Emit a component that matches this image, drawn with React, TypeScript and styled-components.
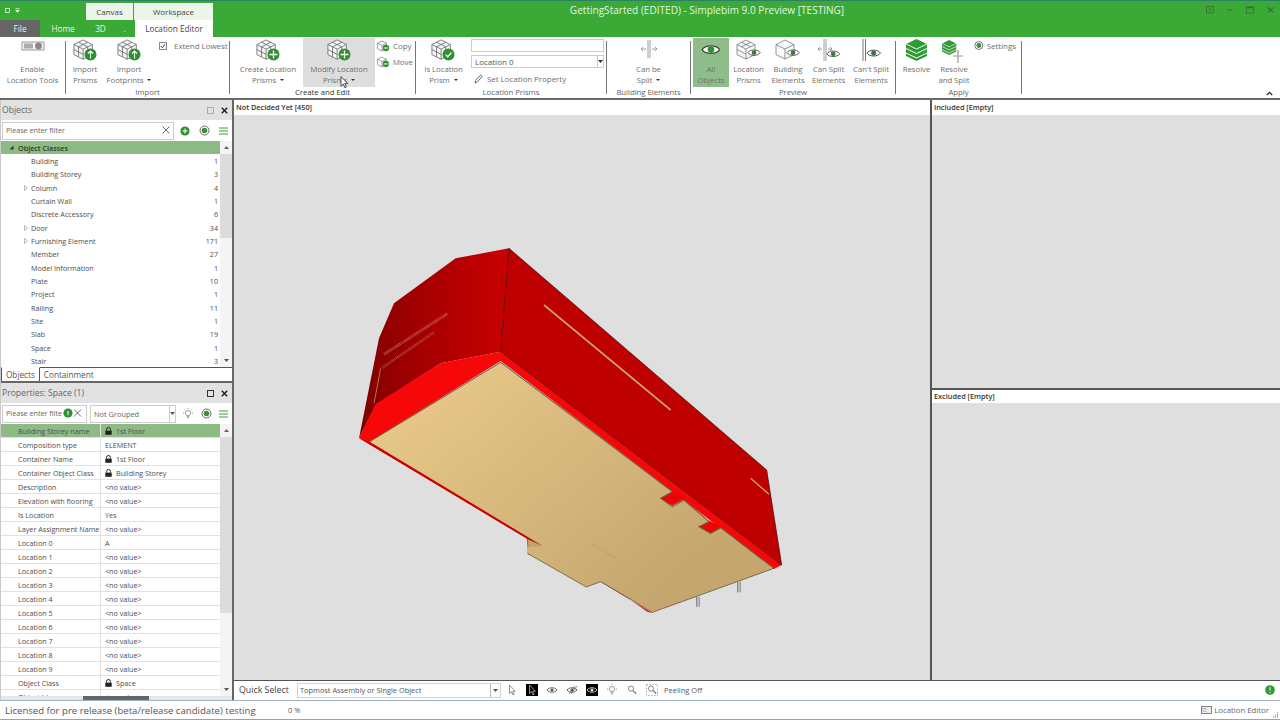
import * as React from 'react'
import styled, { createGlobalStyle } from 'styled-components'

const GlobalStyle = createGlobalStyle`
  html, body { margin: 0; padding: 0; height: 100%; overflow: hidden; }
  body { font-family: "Open Sans", "Noto Sans", "Liberation Sans", sans-serif; }
  * { box-sizing: border-box; }
`

const Window = styled.div`
  width: 1280px;
  height: 720px;
  display: flex;
  flex-direction: column;
  background: #fff;
  overflow: hidden;
`

/* ---------- title bar ---------- */
const TitleBar = styled.div`
  height: 37px;
  background: #3aa935;
  border-top: 1px solid #2b7f63;
  display: flex;
  flex-direction: column;
`
const TitleRow = styled.div`
  height: 19px;
  padding-top: 2px;
  display: flex;
`
const Qat = styled.div`
  width: 86px;
  padding: 4px 0 0 5px;
  display: flex;
  gap: 4px;
  align-items: flex-start;
`
const ContextTab = styled.div<{ $w: number }>`
  width: ${p => p.$w}px;
  margin-right: 1px;
  background: #ecf5ea;
  color: #444;
  font-size: 8px;
  display: flex;
  align-items: center;
  justify-content: center;
`
const Title = styled.div`
  flex: 1;
  text-align: center;
  color: #e6f4e4;
  font-size: 10.05px;
  line-height: 15px;
`
const WinControls = styled.div`
  width: 80px;
  display: flex;
  align-items: flex-start;
  padding-top: 3px;
`
const WinButton = styled.div`
  width: 20px;
  display: flex;
  justify-content: center;
`
const TabRow = styled.div`
  height: 17px;
  display: flex;
`
const FileTab = styled.div`
  width: 40px;
  background: #666;
  color: #eee;
  font-size: 8.2px;
  padding-bottom: 1px;
  display: flex;
  align-items: center;
  justify-content: center;
`
const Tab = styled.div<{ $w: number; $active?: boolean }>`
  width: ${p => p.$w}px;
  background: ${p => (p.$active ? '#fff' : 'transparent')};
  color: ${p => (p.$active ? '#444' : '#e8f5e6')};
  font-size: 8.2px;
  padding-bottom: 1px;
  display: flex;
  align-items: center;
  justify-content: center;
`

/* ---------- ribbon ---------- */
const Ribbon = styled.div`
  height: 63px;
  background: #fff;
  border-bottom: 2px solid #6a6a6a;
  display: flex;
  position: relative;
`
const Group = styled.div<{ $w: number }>`
  width: ${p => p.$w}px;
  display: flex;
  flex-direction: column;
  align-items: stretch;
`
const GroupBody = styled.div<{ $pl?: number }>`
  height: 50px;
  padding: 1px 0 0 ${p => p.$pl ?? 0}px;
  display: flex;
`
const GroupLabel = styled.div<{ $dark?: boolean }>`
  text-align: center;
  font-size: 7.8px;
  letter-spacing: -0.05px;
  line-height: 10px;
  color: ${p => (p.$dark ? '#333' : '#666')};
`
const Sep = styled.div`
  width: 1px;
  margin: 4px 0 4px;
  background: #777;
`
const RibbonButton = styled.div<{ $w: number; $state?: 'hover' | 'on' }>`
  width: ${p => p.$w}px;
  height: 49px;
  flex-shrink: 0;
  display: flex;
  flex-direction: column;
  align-items: center;
  padding-top: 1px;
  background: ${p =>
    p.$state === 'hover' ? '#dedede' : p.$state === 'on' ? '#8fbd8a' : 'transparent'};
`
const ButtonIcon = styled.div`
  height: 25px;
  display: flex;
  align-items: flex-start;
  justify-content: center;
`
const ButtonText = styled.div`
  font-size: 7.8px;
  letter-spacing: -0.05px;
  line-height: 10.5px;
  color: #6f6f6f;
  text-align: center;
  white-space: nowrap;
`
const Caret = styled.span`
  display: inline-block;
  width: 0;
  height: 0;
  margin-left: 4px;
  vertical-align: 2px;
  border-left: 2px solid transparent;
  border-right: 2px solid transparent;
  border-top: 2px solid #333;
`
const SmallStack = styled.div<{ $w: number; $pl?: number }>`
  width: ${p => p.$w}px;
  padding-left: ${p => p.$pl ?? 0}px;
  display: flex;
  flex-direction: column;
  gap: 3px;
  padding-top: 1px;
`
const SmallItem = styled.div`
  height: 13px;
  display: flex;
  align-items: center;
  gap: 3px;
  font-size: 8px;
  letter-spacing: -0.05px;
  color: #6f6f6f;
  white-space: nowrap;
`
const CheckBox = styled.span`
  width: 8px;
  height: 8px;
  margin-right: 4px;
  border: 1px solid #888;
  display: flex;
  align-items: center;
  justify-content: center;
`
const ComboStack = styled.div`
  width: 133px;
  padding-top: 1px;
  display: flex;
  flex-direction: column;
`
const BlankInput = styled.div`
  height: 13px;
  border: 1px solid #ccc;
`
const RibbonCombo = styled.div`
  height: 13px;
  margin-top: 3px;
  border: 1px solid #ccc;
  display: flex;
  align-items: center;
  justify-content: space-between;
  padding-left: 3px;
  font-size: 8px;
  color: #555;
`
const DropButton = styled.div`
  width: 6px;
  align-self: stretch;
  border-left: 1px solid #ccc;
  display: flex;
  align-items: center;
  justify-content: center;
`
const SetProperty = styled(SmallItem)`
  margin-top: 4px;
  padding-left: 3px;
  gap: 4px;
`
const Collapse = styled.div`
  position: absolute;
  right: 7px;
  bottom: 2px;
  line-height: 0;
`
const Pointer = styled.div`
  position: absolute;
  left: 340px;
  top: 39px;
  line-height: 0;
`

/* ---------- main area ---------- */
const Main = styled.div`
  height: 600px;
  display: flex;
`
const LeftColumn = styled.div`
  width: 234px;
  display: flex;
  flex-direction: column;
  border-right: 2px solid #666;
  border-left: 1px solid #c9c9c9;
`
const PanelHead = styled.div`
  height: 20px;
  background: #e2e2e2;
  color: #666;
  font-size: 8.6px;
  display: flex;
  align-items: center;
  padding: 0 1px 0 1px;
`
const PanelTitle = styled.div`
  flex: 1;
`
const HeadIcons = styled.div`
  display: flex;
  align-items: center;
  gap: 7px;
  padding-right: 3px;
`
const FilterRow = styled.div`
  height: 21px;
  display: flex;
  align-items: center;
  background: #fff;
`
const FilterInput = styled.div<{ $w: number }>`
  width: ${p => p.$w}px;
  height: 18px;
  margin-left: 1px;
  flex-shrink: 0;
  border: 1px solid #ccc;
  padding: 0 3px 1px 3px;
  display: flex;
  align-items: center;
  justify-content: space-between;
  font-size: 7.2px;
  color: #666;
  white-space: nowrap;
  overflow: hidden;
`
const FilterActions = styled.div`
  flex: 1;
  display: flex;
  align-items: center;
  justify-content: space-between;
  padding: 0 4px 0 6px;
`
const GroupCombo = styled.div`
  width: 86px;
  height: 18px;
  margin-left: 3px;
  flex-shrink: 0;
  border: 1px solid #ccc;
  padding-left: 3px;
  display: flex;
  align-items: center;
  justify-content: space-between;
  font-size: 7.4px;
  color: #666;
`
const ListArea = styled.div<{ $h: number }>`
  height: ${p => p.$h}px;
  display: flex;
  overflow: hidden;
`
const ListBody = styled.div`
  width: 219px;
  flex-shrink: 0;
  overflow: hidden;
`
const ScrollBar = styled.div`
  flex: 1;
  display: flex;
  flex-direction: column;
  background: #f4f4f4;
`
const ScrollEnd = styled.div`
  height: 13px;
  display: flex;
  align-items: center;
  justify-content: center;
`
const ScrollThumb = styled.div<{ $h: number }>`
  height: ${p => p.$h}px;
  background: #dcdcdc;
`
const ScrollFill = styled.div`
  flex: 1;
`
const TreeHead = styled.div`
  height: 13.3px;
  background: #8dba85;
  display: flex;
  align-items: center;
  padding-left: 8px;
  gap: 4px;
  font-size: 7.2px;
  font-weight: 600;
  color: #2d3d2a;
`
const TreeRow = styled.div`
  height: 13.33px;
  display: grid;
  grid-template-columns: 30px 1fr 28px;
  align-items: center;
  font-size: 7.2px;
  color: #4d4d4d;
`
const Expander = styled.span`
  justify-self: end;
  margin-right: 3px;
  line-height: 0;
`
const Count = styled.span`
  text-align: right;
  padding-right: 2px;
`
const TabStrip = styled.div`
  height: 16px;
  display: flex;
  background: #fff;
  border-top: 1px solid #555;
  border-bottom: 2px solid #666;
  font-size: 8.2px;
  color: #555;
`
const StripTab = styled.div<{ $active?: boolean }>`
  padding: 0 4px 0 4px;
  margin-top: -1px;
  display: flex;
  align-items: center;
  border-right: ${p => (p.$active ? '1px solid #555' : 'none')};
  border-left: ${p => (p.$active ? '1px solid #555' : 'none')};
  border-top: ${p => (p.$active ? '1px solid #fff' : 'none')};
`
const PropRow = styled.div<{ $selected?: boolean }>`
  height: 14px;
  display: grid;
  grid-template-columns: 100px 1fr;
  align-items: center;
  font-size: 7.2px;
  color: #4d4d4d;
  border-bottom: 1px solid #e2e2e2;
  background: ${p => (p.$selected ? '#8dba85' : '#fff')};
`
const PropName = styled.div`
  padding-left: 17px;
  height: 100%;
  display: flex;
  align-items: center;
  border-right: 1px solid #e2e2e2;
  white-space: nowrap;
`
const PropValue = styled.div`
  padding-left: 4px;
  display: flex;
  align-items: center;
  gap: 4px;
`
const HScroll = styled.div`
  height: 4px;
  padding-left: 82px;
  background: #e6e6e6;
`
const HThumb = styled.div`
  width: 66px;
  height: 100%;
  background: #666;
`
const RightColumn = styled.div`
  flex: 1;
  display: flex;
  flex-direction: column;
  min-width: 0;
`
const Views = styled.div`
  height: 580px;
  display: flex;
`
const CenterView = styled.div`
  width: 696px;
  flex-shrink: 0;
  display: flex;
  flex-direction: column;
`
const SidePanes = styled.div`
  flex: 1;
  display: flex;
  flex-direction: column;
  border-left: 2px solid #555;
`
const Pane = styled.div<{ $h?: number; $line?: boolean }>`
  height: ${p => (p.$h ? `${p.$h}px` : 'auto')};
  flex: ${p => (p.$h ? 'none' : 1)};
  display: flex;
  flex-direction: column;
  background: #dfdfdf;
  border-bottom: ${p => (p.$line ? '2px solid #555' : 'none')};
`
const ViewHead = styled.div<{ $h?: number }>`
  height: ${p => p.$h ?? 15}px;
  flex-shrink: 0;
  background: #fff;
  padding: 0 0 2px 2px;
  display: flex;
  align-items: center;
  font-size: 7.3px;
  font-weight: 600;
  color: #333;
`
const Canvas3D = styled.div`
  flex: 1;
  background: #dfdfdf;
  line-height: 0;
`
const SceneSvg = styled.svg`
  display: block;
  width: 696px;
  height: 565px;
`
const QuickBar = styled.div`
  height: 20px;
  background: #fff;
  border-top: 1px solid #555;
  display: flex;
  align-items: center;
  padding: 0 0 1px 5px;
`
const QuickLabel = styled.div`
  width: 58px;
  font-size: 8.8px;
  color: #444;
`
const QuickCombo = styled.div`
  width: 204px;
  height: 15px;
  border: 1px solid #ccd4dc;
  display: flex;
  align-items: center;
  justify-content: space-between;
  padding-left: 2px;
  font-size: 7.4px;
  color: #555;
`
const QuickDrop = styled.div`
  width: 10px;
  align-self: stretch;
  border-left: 1px solid #bbb;
  display: flex;
  align-items: center;
  justify-content: center;
`
const QuickIcons = styled.div`
  display: flex;
  align-items: center;
  margin-left: 1px;
`
const QuickIcon = styled.div`
  width: 20px;
  display: flex;
  justify-content: center;
`
const PeelLabel = styled.div`
  margin-left: 2px;
  font-size: 7.5px;
  color: #555;
`
const QuickEnd = styled.div`
  flex: 1;
  display: flex;
  justify-content: flex-end;
  padding-right: 5px;
`
const StatusBar = styled.div`
  height: 20px;
  background: #fff;
  border-top: 1px solid #9db0bb;
  border-bottom: 1px solid #8ea6b5;
  display: flex;
  align-items: center;
  padding: 0 11px 0 5px;
  font-size: 9.6px;
  color: #555;
  position: relative;
`
const StatusText = styled.div`
  width: 283px;
`
const Percent = styled.div`
  flex: 1;
  font-size: 7.4px;
`
const StatusRight = styled.div`
  display: flex;
  align-items: center;
  gap: 2px;
  font-size: 7.8px;
  color: #667;
`
const Grip = styled.div`
  position: absolute;
  right: 1px;
  bottom: 1px;
  line-height: 0;
`

/* ---------- icons ---------- */
const Svg = ({ w, h, children }: { w: number; h: number; children: React.ReactNode }) => (
  <svg width={w} height={h} viewBox={`0 0 ${w} ${h}`} fill="none">
    {children}
  </svg>
)

const Cubes = ({ scale = 1 }: { scale?: number }) => (
  <g transform={`scale(${scale})`} stroke="#6a6a6a" strokeWidth="0.9" fill="#f6f6f6">
    <path d="M11 1l10 5v11l-10 5-10-5V6z" />
    <path d="M1 6l10 5 10-5M11 11v11" fill="none" />
    <path d="M6 3.5l10 5M16 3.5L6 8.5M1 11.5l10 5.2M6 8.5v11M16 8.5v11" fill="none" />
  </g>
)

type Badge = 'plus' | 'up' | 'check'
const CubeBadge = ({ badge }: { badge: Badge }) => (
  <Svg w={25} h={24}>
    <Cubes scale={0.92} />
    <circle cx="17.5" cy="15.5" r="6" fill="#2f9030" />
    {badge === 'plus' && <path d="M17.5 11.5v8M13.5 15.5h8" stroke="#fff" strokeWidth="1.3" />}
    {badge === 'up' && <path d="M17.5 19.5v-7M15 14.5l2.5-2.5 2.5 2.5" stroke="#fff" strokeWidth="1.1" />}
    {badge === 'check' && <path d="M14.6 15.6l2.1 2.1 3.7-4" stroke="#fff" strokeWidth="1.3" />}
  </Svg>
)
const SmallCube = () => (
  <Svg w={13} h={12}>
    <g stroke="#777" strokeWidth="0.7" fill="#fff">
      <path d="M5 1l4.5 2.2v5.5L5 11 .6 8.7V3.2z" />
      <path d="M.6 3.2L5 5.5l4.5-2.3M5 5.5V11" />
    </g>
    <circle cx="9" cy="8" r="3.2" fill="#2f9030" />
    <path d="M7 8h4" stroke="#fff" strokeWidth="1" />
  </Svg>
)
const ToggleIcon = () => (
  <Svg w={24} h={14}>
    <rect x="1" y="3" width="22" height="8" fill="#f4f4f4" stroke="#999" />
    <rect x="3" y="4.5" width="9" height="5" fill="#aaa" />
    <circle cx="17.5" cy="7" r="3.4" fill="#888" />
  </Svg>
)
const Eye = ({ x = 0, y = 0, s = 1, pupil = '#555' }: { x?: number; y?: number; s?: number; pupil?: string }) => (
  <g transform={`translate(${x} ${y}) scale(${s})`}>
    <path d="M1 6c3-4.6 13-4.6 16 0-3 4.6-13 4.6-16 0z" fill="#fff" stroke="#444" strokeWidth="1.1" />
    <circle cx="9" cy="6" r="3" fill={pupil} />
  </g>
)
const AllObjectsIcon = () => (
  <Svg w={22} h={20}>
    <Eye x={1} y={4} s={1.1} pupil="#2f9030" />
  </Svg>
)
const CubeEye = ({ stack }: { stack?: boolean }) => (
  <Svg w={26} h={24}>
    <g stroke="#777" strokeWidth="0.8" fill="#fafafa">
      <path d="M10 1l9 4.6v10L10 20l-9-4.4v-10z" />
      <path d="M1 5.6L10 10l9-4.4M10 10v10" fill="none" />
      {stack && <path d="M5.5 3.3l9 4.5M14.5 3.3l-9 4.5M1 10.5l9 4.6" fill="none" />}
    </g>
    <Eye x={11} y={9} s={0.78} pupil="#3a7a3a" />
  </Svg>
)
const CanSplitIcon = () => (
  <Svg w={28} h={24}>
    <path d="M9 0v22M11 0v22" stroke="#888" strokeWidth="0.8" />
    <path d="M3 10h4M3 10l2-2M3 10l2 2M17 10h-4M17 10l-2-2M17 10l-2 2" stroke="#888" strokeWidth="0.8" />
    <Eye x={11} y={10} s={0.8} pupil="#3a7a3a" />
  </Svg>
)
const CantSplitIcon = () => (
  <Svg w={26} h={24}>
    <path d="M5 0v22M7.5 0v22" stroke="#666" strokeWidth="0.9" />
    <Eye x={8} y={9} s={0.85} pupil="#3a7a3a" />
  </Svg>
)
const BeSplitIcon = () => (
  <Svg w={22} h={22}>
    <path d="M10 1v18M12 1v18" stroke="#888" strokeWidth="0.8" />
    <path d="M3 10h5M3 10l2-2M3 10l2 2M19 10h-5M19 10l-2-2M19 10l-2 2" stroke="#888" strokeWidth="0.8" />
  </Svg>
)
const Stack = () => (
  <g>
    <path d="M10.5 0L21 5v12L10.5 22 0 17V5z" fill="#2f9a38" />
    <path d="M0 5l10.5 5L21 5" stroke="#fff" strokeWidth="0.9" fill="none" />
    <path d="M0 9.5l10.5 5 10.5-5M0 14l10.5 5L21 14" stroke="#fff" strokeWidth="1" fill="none" />
  </g>
)
const ResolveIcon = () => (
  <Svg w={22} h={24}>
    <Stack />
  </Svg>
)
const ResolveSplitIcon = () => (
  <Svg w={26} h={24}>
    <g transform="translate(1 1) scale(.68)">
      <Stack />
    </g>
    <path d="M17 11v13M12 17h10" stroke="#999" strokeWidth="1.2" />
  </Svg>
)
const Target = ({ r = 5 }: { r?: number }) => (
  <Svg w={r * 2 + 1} h={r * 2 + 1}>
    <circle cx={r + 0.5} cy={r + 0.5} r={r - 0.5} stroke="#666" strokeWidth="1" fill="#fff" />
    <circle cx={r + 0.5} cy={r + 0.5} r={r - 2.2} fill="#3e8e3e" />
  </Svg>
)
const Hamburger = () => (
  <Svg w={9} h={8}>
    <path d="M0 1h9M0 4h9M0 7h9" stroke="#39a335" strokeWidth="1.2" />
  </Svg>
)
const PlusCircle = () => (
  <Svg w={10} h={10}>
    <circle cx="5" cy="5" r="4.6" fill="#2f9030" />
    <path d="M5 2.4v5.2M2.4 5h5.2" stroke="#fff" strokeWidth="1.1" />
  </Svg>
)
const Cross = ({ s = 8 }: { s?: number }) => (
  <Svg w={s} h={s}>
    <path d={`M.5 .5L${s - 0.5} ${s - 0.5}M${s - 0.5} .5L.5 ${s - 0.5}`} stroke="#444" strokeWidth="0.8" />
  </Svg>
)
const CloseBold = () => (
  <Svg w={7} h={7}>
    <path d="M.8 .8l5.4 5.4M6.2 .8L.8 6.2" stroke="#222" strokeWidth="1.5" />
  </Svg>
)
const RestoreBox = ({ dark }: { dark?: boolean }) => (
  <Svg w={7} h={7}>
    <rect x=".5" y=".5" width="6" height="6" stroke={dark ? '#333' : '#aaa'} strokeWidth="1" />
  </Svg>
)
const DownTri = ({ c = '#555' }: { c?: string }) => (
  <Svg w={5} h={3}>
    <path d="M0 0h5L2.5 3z" fill={c} />
  </Svg>
)
const UpTri = () => (
  <Svg w={5} h={3}>
    <path d="M0 3h5L2.5 0z" fill="#666" />
  </Svg>
)
const OpenTri = () => (
  <Svg w={4} h={6}>
    <path d="M.5 .5L3.5 3 .5 5.5z" stroke="#999" strokeWidth="0.7" fill="#fff" />
  </Svg>
)
const Lock = () => (
  <Svg w={7} h={8}>
    <path d="M1.6 3.6V2.4a1.9 1.9 0 0 1 3.8 0v1.2" stroke="#222" strokeWidth="1" />
    <rect x=".3" y="3.6" width="6.4" height="4.2" fill="#222" />
  </Svg>
)
const Bulb = () => (
  <Svg w={12} h={12}>
    <circle cx="6" cy="5.2" r="2.6" stroke="#888" strokeWidth="0.8" fill="#fff" />
    <path d="M4.8 8.5h2.4M5 10h2M6 0v1.2M1 5h1.2M9.8 5H11M2.4 1.6l.9.9M9.6 1.6l-.9.9" stroke="#888" strokeWidth="0.8" />
  </Svg>
)
const Arrow = ({ c = '#666', f = '#fff' }: { c?: string; f?: string }) => (
  <Svg w={9} h={12}>
    <path d="M1.5 1v8.5l2-1.8 1.4 3.2 1.2-.5-1.4-3.1h2.6z" stroke={c} strokeWidth="0.7" fill={f} />
  </Svg>
)
const BlackBox = ({ children }: { children: React.ReactNode }) => (
  <Svg w={12} h={12}>
    <rect width="12" height="12" fill="#000" />
    {children}
  </Svg>
)
const SmallEye = ({ slashed, light }: { slashed?: boolean; light?: boolean }) => (
  <g>
    <path d="M1 6c2.4-3 7.6-3 10 0-2.4 3-7.6 3-10 0z" stroke={light ? '#ddd' : '#555'} strokeWidth="0.9" fill="none" />
    <circle cx="6" cy="6" r="1.6" fill={light ? '#ddd' : '#555'} />
    {slashed && <path d="M3 10l6-8M5 10l6-8" stroke="#555" strokeWidth="0.7" />}
  </g>
)
const Magnifier = ({ dashed }: { dashed?: boolean }) => (
  <Svg w={12} h={12}>
    {dashed && <rect x=".5" y=".5" width="11" height="11" stroke="#888" strokeWidth="0.7" strokeDasharray="1.5 1.5" />}
    <circle cx="5" cy="4.6" r="2.6" stroke="#777" strokeWidth="0.9" fill="#fff" />
    <path d="M7 6.6l3.2 3.2" stroke="#777" strokeWidth="1.3" />
  </Svg>
)
const Pencil = () => (
  <Svg w={9} h={10}>
    <path d="M1 9l.6-2.6L6.6 1 8.2 2.5 3.2 8z" stroke="#444" strokeWidth="0.8" fill="#fff" />
  </Svg>
)

/* ---------- 3D model, coordinates measured on a 3x crop ---------- */
const Scene = () => (
  <SceneSvg viewBox="235 115 696 565">
    <defs>
      <linearGradient id="side" x1="60" y1="0" x2="500" y2="0" gradientUnits="userSpaceOnUse">
        <stop offset="0" stopColor="#7d0000" />
        <stop offset="0.35" stopColor="#a00000" />
        <stop offset="1" stopColor="#c80000" />
      </linearGradient>
      <linearGradient id="base" x1="300" y1="450" x2="900" y2="1150" gradientUnits="userSpaceOnUse">
        <stop offset="0" stopColor="#e6c688" />
        <stop offset="1" stopColor="#c4a66e" />
      </linearGradient>
    </defs>
    <g transform="translate(340 235) scale(0.33333)">
      <polygon points="565,910 612,932 568,958" fill="#bfa36a" stroke="#5a4c30" strokeWidth="2" />
      <polygon points="60,610 92,618 612,932 565,912" fill="#c80000" />
      <polygon points="785,1040 940,1135 925,1130 790,1035" fill="#d20000" />
      <polygon points="510,40 350,70 165,205 120,310 60,610 110,510 305,385 485,350" fill="url(#side)" />
      <polygon points="510,40 1283,705 1328,990 485,350" fill="#bf0000" />
      <polygon points="60,610 110,507 305,385 485,350 1328,990 1305,1002 485,378 92,620" fill="#f60808" />
      <polygon points="995,765 960,790 1000,812 1040,790" fill="#ec0505" />
      <polygon points="1105,855 1075,875 1115,897 1150,875" fill="#ec0505" />
      <polygon
        points="92,620 485,385 1000,770 965,790 1000,815 1035,795 1110,860 1080,875 1115,895 1145,878 1305,1000 940,1132 785,1040 742,1056 565,955 565,935 610,932"
        fill="url(#base)"
      />
      <polyline
        points="92,620 485,382 1000,770 965,790 1000,815 1035,795 1110,860 1080,875 1115,895 1145,878 1305,1000"
        stroke="#6d5c3a"
        strokeWidth="3.2"
        fill="none"
      />
      <polyline points="1305,1000 940,1132 785,1040 742,1056 565,955" stroke="#4e4329" strokeWidth="2" fill="none" />
      <g stroke="#3a0000" strokeWidth="2" fill="none">
        <path d="M510,40 L485,350 L1328,990 M510,40 L1283,705 L1328,990" />
      </g>
      <path d="M615,210 L995,525" stroke="#c8a36a" strokeWidth="5" />
      <path d="M1235,730 L1290,778" stroke="#c8a36a" strokeWidth="4" />
      <path d="M135,358 L325,236" stroke="#d0a090" strokeWidth="9" strokeDasharray="2 2" opacity="0.6" />
      <path d="M130,398 L285,292" stroke="#d0a090" strokeWidth="8" strokeDasharray="2 3" opacity="0.6" />
      <path d="M125,400 L105,505" stroke="#c8a080" strokeWidth="3" opacity="0.7" />
      <path d="M757,925 L830,970" stroke="#b09560" strokeWidth="1.5" />
      <path d="M1077,1085 V1115 M1200,1040 V1072" stroke="#c4c4c4" strokeWidth="10" />
      <path d="M1073,1085 V1115 M1196,1040 V1072" stroke="#555" strokeWidth="2" />
      <path d="M1081,1085 V1115 M1204,1040 V1072" stroke="#777" strokeWidth="2" />
    </g>
  </SceneSvg>
)

/* ---------- data ---------- */
const treeRows: [string, number, boolean][] = [
  ['Building', 1, false],
  ['Building Storey', 3, false],
  ['Column', 4, true],
  ['Curtain Wall', 1, false],
  ['Discrete Accessory', 6, false],
  ['Door', 34, true],
  ['Furnishing Element', 171, true],
  ['Member', 27, false],
  ['Model Information', 1, false],
  ['Plate', 10, false],
  ['Project', 1, false],
  ['Railing', 11, false],
  ['Site', 1, false],
  ['Slab', 19, false],
  ['Space', 1, false],
  ['Stair', 3, false]
]
const propRows: [string, string, boolean][] = [
  ['Building Storey name', '1st Floor', true],
  ['Composition type', 'ELEMENT', false],
  ['Container Name', '1st Floor', true],
  ['Container Object Class', 'Building Storey', true],
  ['Description', '<no value>', false],
  ['Elevation with flooring', '<no value>', false],
  ['Is Location', 'Yes', false],
  ['Layer Assignment Name', '<no value>', false],
  ['Location 0', 'A', false],
  ['Location 1', '<no value>', false],
  ['Location 2', '<no value>', false],
  ['Location 3', '<no value>', false],
  ['Location 4', '<no value>', false],
  ['Location 5', '<no value>', false],
  ['Location 6', '<no value>', false],
  ['Location 7', '<no value>', false],
  ['Location 8', '<no value>', false],
  ['Location 9', '<no value>', false],
  ['Object Class', 'Space', true],
  ['Object Id', '<no value>', false]
]

const RBtn = (props: {
  w: number
  icon: React.ReactNode
  lines: [string, string]
  caret?: boolean
  state?: 'hover' | 'on'
}) => (
  <RibbonButton $w={props.w} $state={props.state}>
    <ButtonIcon>{props.icon}</ButtonIcon>
    <ButtonText>{props.lines[0]}</ButtonText>
    <ButtonText>
      {props.lines[1]}
      {props.caret && <Caret />}
    </ButtonText>
  </RibbonButton>
)

export default function App() {
  return (
    <Window>
      <GlobalStyle />
      <TitleBar>
        <TitleRow>
          <Qat>
            <Svg w={6} h={6}>
              <rect x=".5" y="1.5" width="4" height="4" stroke="#e8f5e6" strokeWidth="0.8" />
            </Svg>
            <Svg w={5} h={6}>
              <path d="M.5 1.5h4M.5 3.2h4L2.5 5.4z" stroke="#e8f5e6" strokeWidth="0.6" fill="#e8f5e6" />
            </Svg>
          </Qat>
          <ContextTab $w={47}>Canvas</ContextTab>
          <ContextTab $w={79}>Workspace</ContextTab>
          <Title>GettingStarted (EDITED) - Simplebim 9.0 Preview [TESTING]</Title>
          <WinControls>
            <WinButton>
              <Svg w={8} h={8}>
                <rect x=".5" y=".5" width="7" height="6.5" stroke="#3f6b3c" strokeWidth="0.8" />
                <path d="M4 6V2.5M2.5 3.8L4 2.4l1.5 1.4" stroke="#3f6b3c" strokeWidth="0.7" />
              </Svg>
            </WinButton>
            <WinButton>
              <Svg w={6} h={8}>
                <path d="M0 4h5" stroke="#3f6b3c" strokeWidth="1" />
              </Svg>
            </WinButton>
            <WinButton>
              <Svg w={8} h={8}>
                <rect x=".5" y="1" width="7" height="6" stroke="#3f6b3c" strokeWidth="0.8" />
                <path d="M.5 1.5h7" stroke="#3f6b3c" strokeWidth="1.4" />
              </Svg>
            </WinButton>
            <WinButton>
              <Svg w={7} h={8}>
                <path d="M1 1.5l5 5M6 1.5l-5 5" stroke="#3f6b3c" strokeWidth="1.1" />
              </Svg>
            </WinButton>
          </WinControls>
        </TitleRow>
        <TabRow>
          <FileTab>File</FileTab>
          <Tab $w={46}>Home</Tab>
          <Tab $w={29}>3D</Tab>
          <Tab $w={19}>.</Tab>
          <Tab $w={1} />
          <Tab $w={78} $active>
            Location Editor
          </Tab>
        </TabRow>
      </TitleBar>

      <Ribbon>
        <Group $w={65}>
          <GroupBody>
            <RBtn w={65} icon={<ToggleIcon />} lines={['Enable', 'Location Tools']} />
          </GroupBody>
        </Group>
        <Sep />
        <Group $w={163}>
          <GroupBody>
            <RBtn w={38} icon={<CubeBadge badge="up" />} lines={['Import', 'Prisms']} />
            <RBtn w={50} icon={<CubeBadge badge="up" />} lines={['Import', 'Footprints']} caret />
            <SmallStack $w={74} $pl={5}>
              <SmallItem>
                <CheckBox>
                  <Svg w={6} h={6}>
                    <path d="M.8 3l1.6 1.8L5.2 1" stroke="#333" strokeWidth="0.9" />
                  </Svg>
                </CheckBox>
                Extend Lowest
              </SmallItem>
            </SmallStack>
          </GroupBody>
          <GroupLabel>Import</GroupLabel>
        </Group>
        <Sep />
        <Group $w={185}>
          <GroupBody $pl={3}>
            <RBtn w={70} icon={<CubeBadge badge="plus" />} lines={['Create Location', 'Prisms']} caret />
            <RBtn w={72} icon={<CubeBadge badge="plus" />} lines={['Modify Location', 'Prisms']} caret state="hover" />
            <SmallStack $w={38} $pl={2}>
              <SmallItem>
                <SmallCube />
                Copy
              </SmallItem>
              <SmallItem>
                <SmallCube />
                Move
              </SmallItem>
            </SmallStack>
          </GroupBody>
          <GroupLabel $dark>Create and Edit</GroupLabel>
        </Group>
        <Sep />
        <Group $w={190}>
          <GroupBody>
            <RBtn w={55} icon={<CubeBadge badge="check" />} lines={['Is Location', 'Prism']} caret />
            <ComboStack>
              <BlankInput />
              <RibbonCombo>
                Location 0
                <DropButton>
                  <DownTri c="#333" />
                </DropButton>
              </RibbonCombo>
              <SetProperty>
                <Pencil />
                Set Location Property
              </SetProperty>
            </ComboStack>
          </GroupBody>
          <GroupLabel>Location Prisms</GroupLabel>
        </Group>
        <Sep />
        <Group $w={83}>
          <GroupBody>
            <RBtn w={83} icon={<BeSplitIcon />} lines={['Can be', 'Split']} caret />
          </GroupBody>
          <GroupLabel>Building Elements</GroupLabel>
        </Group>
        <Sep />
        <Group $w={204}>
          <GroupBody $pl={2}>
            <RBtn w={36} icon={<AllObjectsIcon />} lines={['All', 'Objects']} state="on" />
            <RBtn w={39} icon={<CubeEye stack />} lines={['Location', 'Prisms']} />
            <RBtn w={40} icon={<CubeEye />} lines={['Building', 'Elements']} />
            <RBtn w={41} icon={<CanSplitIcon />} lines={['Can Split', 'Elements']} />
            <RBtn w={44} icon={<CantSplitIcon />} lines={["Can't Split", 'Elements']} />
          </GroupBody>
          <GroupLabel>Preview</GroupLabel>
        </Group>
        <Sep />
        <Group $w={125}>
          <GroupBody $pl={1}>
            <RBtn w={39} icon={<ResolveIcon />} lines={['Resolve', '']} />
            <RBtn w={36} icon={<ResolveSplitIcon />} lines={['Resolve', 'and Split']} />
            <SmallStack $w={44} $pl={2}>
              <SmallItem>
                <Target r={5} />
                Settings
              </SmallItem>
            </SmallStack>
          </GroupBody>
          <GroupLabel>Apply</GroupLabel>
        </Group>
        <Sep />
        <Collapse>
          <Svg w={7} h={5}>
            <path d="M.8 4L3.5 1.3 6.2 4" stroke="#222" strokeWidth="1.2" />
          </Svg>
        </Collapse>
        <Pointer>
          <Svg w={9} h={13}>
            <path d="M1 .5v9.6l2.3-2 1.5 3.6 1.5-.6-1.5-3.5h3z" fill="#fff" stroke="#222" strokeWidth="0.8" />
          </Svg>
        </Pointer>
      </Ribbon>

      <Main>
        <LeftColumn>
          <PanelHead>
            <PanelTitle>Objects</PanelTitle>
            <HeadIcons>
              <RestoreBox />
              <CloseBold />
            </HeadIcons>
          </PanelHead>
          <FilterRow>
            <FilterInput $w={172}>
              Please enter filter
              <Cross />
            </FilterInput>
            <FilterActions>
              <PlusCircle />
              <Target />
              <Hamburger />
            </FilterActions>
          </FilterRow>
          <ListArea $h={226}>
            <ListBody>
              <TreeHead>
                <Svg w={5} h={5}>
                  <path d="M4.5 .5v4h-4z" fill="#2d3d2a" />
                </Svg>
                Object Classes
              </TreeHead>
              {treeRows.map(([name, count, open]) => (
                <TreeRow key={name}>
                  <Expander>{open && <OpenTri />}</Expander>
                  <span>{name}</span>
                  <Count>{count}</Count>
                </TreeRow>
              ))}
            </ListBody>
            <ScrollBar>
              <ScrollEnd>
                <UpTri />
              </ScrollEnd>
              <ScrollThumb $h={84} />
              <ScrollFill />
              <ScrollEnd>
                <DownTri />
              </ScrollEnd>
            </ScrollBar>
          </ListArea>
          <TabStrip>
            <StripTab $active>Objects</StripTab>
            <StripTab>Containment</StripTab>
          </TabStrip>
          <PanelHead>
            <PanelTitle>Properties: Space (1)</PanelTitle>
            <HeadIcons>
              <RestoreBox dark />
              <CloseBold />
            </HeadIcons>
          </PanelHead>
          <FilterRow>
            <FilterInput $w={85}>
              Please enter filte
              <Svg w={20} h={10}>
                <circle cx="5" cy="5" r="4.6" fill="#2f9030" />
                <path d="M5 2.8v4.4" stroke="#fff" strokeWidth="1" />
                <path d="M11 1.5l7 7M18 1.5l-7 7" stroke="#444" strokeWidth="0.8" />
              </Svg>
            </FilterInput>
            <GroupCombo>
              Not Grouped
              <DropButton>
                <DownTri />
              </DropButton>
            </GroupCombo>
            <FilterActions>
              <Bulb />
              <Target />
              <Hamburger />
            </FilterActions>
          </FilterRow>
          <ListArea $h={272}>
            <ListBody>
              {propRows.map(([name, value, locked], i) => (
                <PropRow key={name} $selected={i === 0}>
                  <PropName>{name}</PropName>
                  <PropValue>
                    {locked && <Lock />}
                    {value}
                  </PropValue>
                </PropRow>
              ))}
            </ListBody>
            <ScrollBar>
              <ScrollEnd>
                <UpTri />
              </ScrollEnd>
              <ScrollThumb $h={176} />
              <ScrollFill />
              <ScrollEnd>
                <DownTri />
              </ScrollEnd>
            </ScrollBar>
          </ListArea>
          <HScroll>
            <HThumb />
          </HScroll>
        </LeftColumn>

        <RightColumn>
          <Views>
            <CenterView>
              <ViewHead>Not Decided Yet [450]</ViewHead>
              <Canvas3D>
                <Scene />
              </Canvas3D>
            </CenterView>
            <SidePanes>
              <Pane $h={290} $line>
                <ViewHead>Included [Empty]</ViewHead>
              </Pane>
              <Pane>
                <ViewHead $h={13}>Excluded [Empty]</ViewHead>
              </Pane>
            </SidePanes>
          </Views>
          <QuickBar>
            <QuickLabel>Quick Select</QuickLabel>
            <QuickCombo>
              Topmost Assembly or Single Object
              <QuickDrop>
                <DownTri />
              </QuickDrop>
            </QuickCombo>
            <QuickIcons>
              <QuickIcon>
                <Arrow />
              </QuickIcon>
              <QuickIcon>
                <BlackBox>
                  <g transform="translate(2 0)">
                    <path d="M1.5 1v8.5l2-1.8 1.4 3.2 1.2-.5-1.4-3.1h2.6z" stroke="#ccc" strokeWidth="0.7" fill="#000" />
                  </g>
                </BlackBox>
              </QuickIcon>
              <QuickIcon>
                <Svg w={12} h={12}>
                  <SmallEye />
                </Svg>
              </QuickIcon>
              <QuickIcon>
                <Svg w={12} h={12}>
                  <SmallEye slashed />
                </Svg>
              </QuickIcon>
              <QuickIcon>
                <BlackBox>
                  <SmallEye light />
                </BlackBox>
              </QuickIcon>
              <QuickIcon>
                <Bulb />
              </QuickIcon>
              <QuickIcon>
                <Magnifier />
              </QuickIcon>
              <QuickIcon>
                <Magnifier dashed />
              </QuickIcon>
            </QuickIcons>
            <PeelLabel>Peeling Off</PeelLabel>
            <QuickEnd>
              <Svg w={10} h={10}>
                <circle cx="5" cy="5" r="4.8" fill="#2f9a35" />
                <path d="M5 2.2v3.4M5 6.8v1.2" stroke="#fff" strokeWidth="1" />
              </Svg>
            </QuickEnd>
          </QuickBar>
        </RightColumn>
      </Main>

      <StatusBar>
        <StatusText>Licensed for pre release (beta/release candidate) testing</StatusText>
        <Percent>0 %</Percent>
        <StatusRight>
          <Svg w={11} h={8}>
            <rect x=".5" y=".5" width="10" height="7" stroke="#666" strokeWidth="0.8" fill="#eee" />
            <rect x="2" y="2.5" width="3" height="3" stroke="#888" strokeWidth="0.5" />
          </Svg>
          Location Editor
        </StatusRight>
        <Grip>
          <Svg w={6} h={6}>
            <path d="M4 1h1M2 3h1M4 3h1M0 5h1M2 5h1M4 5h1" stroke="#667" strokeWidth="1" />
          </Svg>
        </Grip>
      </StatusBar>
    </Window>
  )
}
